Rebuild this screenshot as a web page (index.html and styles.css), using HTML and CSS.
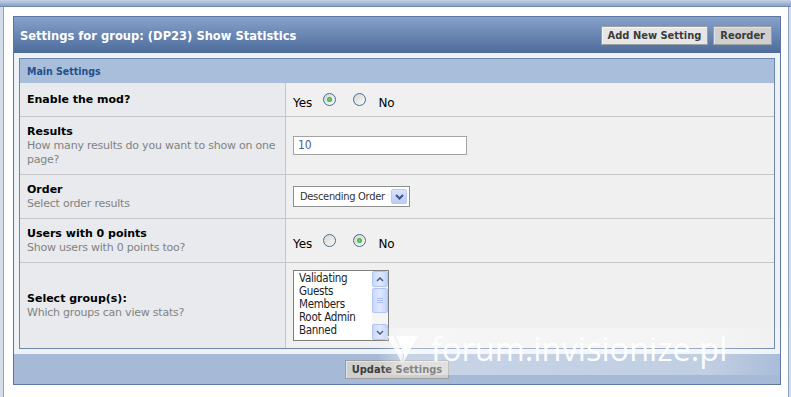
FILE: index.html
```html
<!DOCTYPE html>
<html lang="en">

<head>
    <meta charset="UTF-8">
    <title>Settings for group: (DP23) Show Statistics</title>
    <link rel="stylesheet" href="styles.css">
</head>

<body>
    <div class="topbar"></div>
    <div class="page">
        <div class="box">
            <div class="box-head">
                <h2>Settings for group: (DP23) Show Statistics</h2>
                <div class="head-buttons">
                    <span class="btn">Add New Setting</span>
                    <span class="btn btn-dark">Reorder</span>
                </div>
            </div>
            <div class="box-body">
                <div class="section">
                    <div class="section-title">Main Settings</div>
                    <table class="settings">
                        <tr>
                            <td class="label-cell"><strong>Enable the mod?</strong></td>
                            <td class="field-cell">
                                <div class="choice">
                                    <span>Yes</span>
                                    <span class="radio checked"></span>
                                    <span class="radio second"></span>
                                    <span class="no">No</span>
                                </div>
                            </td>
                        </tr>
                        <tr>
                            <td class="label-cell">
                                <strong>Results</strong>
                                <div class="desc">How many results do you want to show on one page?</div>
                            </td>
                            <td class="field-cell">
                                <div class="textbox">10</div>
                            </td>
                        </tr>
                        <tr>
                            <td class="label-cell">
                                <strong>Order</strong>
                                <div class="desc">Select order results</div>
                            </td>
                            <td class="field-cell">
                                <div class="dropdown">
                                    <span>Descending Order</span>
                                    <span class="drop-btn">
                                        <svg width="9" height="6" viewBox="0 0 9 6"><path d="M1 1 L4.5 4.5 L8 1" fill="none" stroke="#3f5680" stroke-width="2"/></svg>
                                    </span>
                                </div>
                            </td>
                        </tr>
                        <tr>
                            <td class="label-cell">
                                <strong>Users with 0 points</strong>
                                <div class="desc">Show users with 0 points too?</div>
                            </td>
                            <td class="field-cell">
                                <div class="choice">
                                    <span>Yes</span>
                                    <span class="radio"></span>
                                    <span class="radio second checked"></span>
                                    <span class="no">No</span>
                                </div>
                            </td>
                        </tr>
                        <tr class="last">
                            <td class="label-cell">
                                <strong>Select group(s):</strong>
                                <div class="desc">Which groups can view stats?</div>
                            </td>
                            <td class="field-cell">
                                <div class="listbox">
                                    <div class="list-items">
                                        <div>Validating</div>
                                        <div>Guests</div>
                                        <div>Members</div>
                                        <div>Root Admin</div>
                                        <div>Banned</div>
                                    </div>
                                    <div class="scrollbar">
                                        <span class="sb-btn">
                                            <svg width="8" height="5" viewBox="0 0 8 5"><path d="M1 4 L4 1 L7 4" fill="none" stroke="#4d6185" stroke-width="1.6"/></svg>
                                        </span>
                                        <span class="sb-thumb">
                                            <svg width="6" height="6" viewBox="0 0 6 6"><path d="M0 .5H6M0 2.5H6M0 4.5H6" stroke="#a9bdf0" stroke-width="1"/></svg>
                                        </span>
                                        <span class="sb-btn sb-down">
                                            <svg width="8" height="5" viewBox="0 0 8 5"><path d="M1 1 L4 4 L7 1" fill="none" stroke="#4d6185" stroke-width="1.6"/></svg>
                                        </span>
                                    </div>
                                </div>
                            </td>
                        </tr>
                    </table>
                </div>
            </div>
            <div class="box-foot">
                <span class="btn btn-dark">Update Settings</span>
            </div>
        </div>
    </div>

    <!-- watermark over the screenshot -->
    <div class="watermark">
        <svg class="wm-logo" width="31" height="28" viewBox="0 0 31 28">
            <polygon points="0,0 6,0 16,19 15,27" fill="rgba(255,255,255,0.8)"/>
            <polygon points="9,0 31,0 16,27 17,18" fill="rgba(255,255,255,0.92)"/>
        </svg>
        <span class="wm-text">forum.invisionize.pl</span>
    </div>
</body>

</html>
```

FILE: styles.css
```css
body {
    margin: 0;
    background-color: #d3dce9;
    font-family: "DejaVu Sans", Verdana, sans-serif;
    font-size: 11px;
    color: #000;
}

.topbar {
    height: 6px;
    background: linear-gradient(#c5d2e5, #89a2c7);
    border-bottom: 1px solid #7089b0;
}

.page {
    margin: 0 2px 0 3px;
    padding: 9px 7px 20px 9px;
    background-color: #fff;
    border: 1px solid #8ea3c3;
    border-top: none;
}

.box {
    border: 1px solid #5b77a2;
    background-color: #eef2f7;
}

.box-head {
    display: flex;
    align-items: center;
    justify-content: space-between;
    height: 36px;
    padding: 0 8px 0 6px;
    background: linear-gradient(#86a2ca, #4d6c9b);
}

.box-head h2 {
    margin: 0;
    color: #fff;
    font-family: "DejaVu Sans Condensed", "DejaVu Sans", sans-serif;
    font-size: 12.8px;
    font-weight: bold;
}

.head-buttons {
    display: flex;
    gap: 5px;
}

.btn {
    display: inline-block;
    height: 19px;
    box-sizing: border-box;
    padding: 0 6px;
    line-height: 17px;
    border: 1px solid #9e9e9e;
    background-color: #e6e6e6;
    color: #3b3b3b;
    font-family: "DejaVu Sans Condensed", "DejaVu Sans", sans-serif;
    font-size: 11px;
    font-weight: bold;
    box-shadow: inset 1px 1px 0 #f6f6f6;
}

.btn-dark {
    background-color: #cfcfcf;
    box-shadow: inset 1px 1px 0 #e2e2e2;
}

.box-body {
    padding: 5px;
}

.section {
    border: 1px solid #6d86ae;
}

.section-title {
    height: 24px;
    line-height: 25px;
    padding-left: 7px;
    background-color: #a9bedb;
    color: #23508b;
    font-family: "DejaVu Sans Condensed", "DejaVu Sans", sans-serif;
    font-size: 10.5px;
    font-weight: bold;
}

.settings {
    width: 100%;
    border-spacing: 0;
    table-layout: fixed;
}

.settings td {
    vertical-align: middle;
    border-bottom: 1px solid #c6c6c6;
}

.settings tr.last td {
    border-bottom: none;
}

.label-cell {
    width: 266px;
    box-sizing: border-box;
    padding: 7px 4px 7px 7px;
    background-color: #e8eaee;
    border-right: 1px solid #c6c6c6;
    line-height: 15px;
}

.desc {
    color: #828282;
    line-height: 14px;
    letter-spacing: -0.22px;
}

.field-cell {
    padding: 7px;
    background-color: #f0f0f0;
}

.choice {
    display: flex;
    align-items: center;
    height: 17px;
    font-size: 12px;
    padding-top: 2px;
}

.choice > span:first-child,
.no {
    position: relative;
    top: 2px;
}

.radio {
    position: relative;
    width: 13px;
    height: 13px;
    box-sizing: border-box;
    margin-left: 11px;
    margin-top: -2px;
    border: 1px solid #456c98;
    border-radius: 50%;
    background: linear-gradient(135deg, #d5d5cf, #fbfbf9);
}

.radio.second {
    margin-left: 17px;
}

.radio.checked::after {
    content: "";
    position: absolute;
    left: 3px;
    top: 3px;
    width: 5px;
    height: 5px;
    border-radius: 50%;
    background: radial-gradient(#6fdc6f, #1f9a1f);
}

.no {
    margin-left: 12px;
}

.textbox {
    width: 174px;
    height: 19px;
    box-sizing: border-box;
    padding-left: 4px;
    border: 1px solid #a3a3a3;
    background-color: #fff;
    color: #53607f;
    font-family: "DejaVu Sans Condensed", "DejaVu Sans", sans-serif;
    font-size: 12px;
    line-height: 17px;
}

.dropdown {
    display: flex;
    align-items: center;
    width: 117px;
    height: 21px;
    box-sizing: border-box;
    padding: 0 2px 0 6px;
    border: 1px solid #8f8f8f;
    background-color: #fff;
    color: #333;
    font-family: "DejaVu Sans Condensed", "DejaVu Sans", sans-serif;
    font-size: 11px;
    letter-spacing: -0.3px;
}

.drop-btn {
    display: flex;
    align-items: center;
    justify-content: center;
    width: 16px;
    height: 15px;
    margin-left: auto;
    border: 1px solid #b8c9f2;
    border-radius: 2px;
    background: linear-gradient(#dae4fd, #b9cbf8);
    box-sizing: border-box;
}

.listbox {
    display: flex;
    width: 96px;
    height: 71px;
    box-sizing: border-box;
    border: 1px solid #7e7e7e;
    background-color: #fff;
}

.list-items {
    flex: 1;
    padding: 1px 0 0 5px;
    color: #222;
    font-family: "DejaVu Sans Condensed", "DejaVu Sans", sans-serif;
    font-size: 11.5px;
    line-height: 13px;
    letter-spacing: -0.3px;
}

.scrollbar {
    display: flex;
    flex-direction: column;
    width: 16px;
    background-color: #f5f5f1;
}

.sb-btn,
.sb-thumb {
    display: flex;
    align-items: center;
    justify-content: center;
    box-sizing: border-box;
    border: 1px solid #b3c6f3;
    border-radius: 2px;
    background: linear-gradient(90deg, #cbd8fc, #dfe8fe 50%, #c4d3fb);
}

.sb-btn {
    height: 16px;
}

.sb-thumb {
    height: 25px;
    margin-top: 1px;
}

.sb-down {
    margin-top: auto;
}

.box-foot {
    display: flex;
    justify-content: center;
    align-items: center;
    height: 30px;
    background-color: #a6bad7;
}

.watermark {
    position: absolute;
    left: 378px;
    top: 328px;
    width: 413px;
    height: 47px;
    display: flex;
    align-items: center;
    background: linear-gradient(to right, rgba(255, 255, 255, 0), rgba(255, 255, 255, 0.38) 6%, rgba(255, 255, 255, 0.3) 80%, rgba(255, 255, 255, 0));
}

.wm-logo {
    margin-left: 9px;
    margin-top: -4px;
}

.wm-text {
    margin-left: 13px;
    margin-top: -6px;
    color: rgba(255, 255, 255, 0.95);
    font-family: "Open Sans", sans-serif;
    font-size: 32.5px;
}
```
